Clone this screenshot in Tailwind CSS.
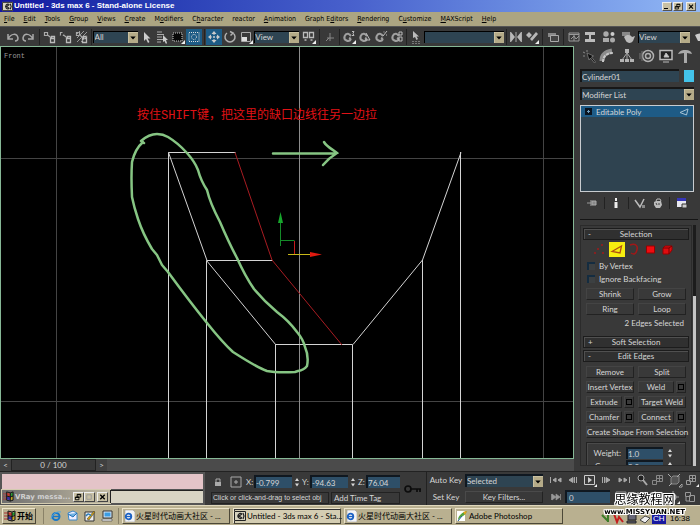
<!DOCTYPE html>
<html lang="en">
<head>
<meta charset="utf-8">
<title>Untitled - 3ds max 6 - Stand-alone License</title>
<script src="https://cdn.jsdelivr.net/npm/@tailwindcss/browser@4"></script>
</head>
<body class="flex h-screen flex-col overflow-hidden bg-[#393939] font-['Lato','Noto_Sans_CJK_SC',sans-serif] text-[8px] leading-[10px] text-[#d6d6d6]">
<svg class="hidden">
  <symbol id="down" viewBox="0 0 10 11"><path d="M0 0h10v11H0z" fill="#b5ab88"/><path d="M0 11V0h10" fill="none" stroke="#ddd5b8"/><path d="M2.300 4.500h5.400L5 7.500z" fill="#000"/></symbol>
  <symbol id="spin" viewBox="0 0 6 12"><path d="M1 5l2-3 2 3zM1 7.500l2 3 2-3z" fill="#d8d8d8"/></symbol>
  <symbol id="link" viewBox="0 0 16 16"><path d="M2.500 3.500h3v3h-3zM5.500 6l4 3" fill="none" stroke="#aaa" stroke-width="1.200"/><path d="M8.500 9.500h4v4h-4zM9.500 9V7.500h3V9" fill="none" stroke="#bbb" stroke-width="1.300"/></symbol>
  <symbol id="magnet" viewBox="0 0 16 16"><path d="M8 5a3.500 3.500 0 1 0 2 5M8 5l2 2M8 9l2 1" fill="none" stroke="#a0a0a0" stroke-width="2"/></symbol>
  <symbol id="ie" viewBox="0 0 12 12"><circle cx="6" cy="6.500" r="3.500" fill="none" stroke="#1978c8" stroke-width="2"/><path d="M3 6.500h6" stroke="#1978c8" stroke-width="1.500"/><path d="M1 9C2 4 7 1 11 2" fill="none" stroke="#55a6dd"/></symbol>
  <symbol id="iepage" viewBox="0 0 12 12"><path d="M2 0h8l2 2v10H2z" fill="#f4f4f4" stroke="#888" stroke-width=".5"/><circle cx="5.500" cy="6.500" r="2.800" fill="none" stroke="#1c62c4" stroke-width="1.800"/><path d="M3 6.500h5" stroke="#1c62c4" stroke-width="1.300"/></symbol>
  <symbol id="max" viewBox="0 0 12 12"><path d="M0 1h12v10H0z" fill="#d8d4c0"/><path d="M.5 1.500h11v9H.5z" fill="none" stroke="#222"/><path d="M8 4a2.500 2.500 0 1 0 0 4M8 4L5 6l3 2M9 3l1 3-1 3" fill="none" stroke="#222" stroke-width="1.200"/></symbol>
  <symbol id="win" viewBox="0 0 12 12"><path d="M1 2v8M3 2v8" stroke="#a33" stroke-dasharray="2 1"/><path d="M4 2l4 1v3L4 5z" fill="#c33a30"/><path d="M8 3l3-1v3L8 6z" fill="#279c32"/><path d="M4 6l4 1v3L4 9z" fill="#3a2fa8"/><path d="M8 7l3-1v3l-3 1z" fill="#c7a51f"/><path d="M4 1l4 1 3-1v9l-3 1-4-1zM8 2v9M4 5.500l4 1 3-1" fill="none" stroke="#111"/></symbol>
  <symbol id="restore" viewBox="0 0 10 9"><path d="M3.500 1.500h4v3h-4zM3.500 2h4M1.500 4.500h4v3h-4zM1.500 5h4" fill="none" stroke="#000"/></symbol>
  <symbol id="close" viewBox="0 0 10 9"><path d="M2.500 2l5 5M7.500 2l-5 5" stroke="#000" stroke-width="1.500"/></symbol>
</svg>

<header class="flex h-3 shrink-0 items-center gap-px bg-linear-to-r from-[#1416a0] via-[#4860cc] to-[#92b8f5] pl-0.5 pr-1 font-['Liberation_Sans',sans-serif] font-bold text-white">
  <svg class="size-[11px]"><use href="#max"/></svg>
  <h1 class="flex-1">Untitled - 3ds max 6 - Stand-alone License</h1>
  <button aria-label="Minimize" class="h-[9px] w-[10px] border border-[#eee] border-r-[#555] border-b-[#555] bg-[#c8c0a4]"><svg viewBox="0 0 8 7"><path d="M1 5.500h4" stroke="#000"/></svg></button>
  <button aria-label="Restore" class="h-[9px] w-[10px] border border-[#eee] border-r-[#555] border-b-[#555] bg-[#c8c0a4]"><svg viewBox="0 0 10 9"><use href="#restore"/></svg></button>
  <button aria-label="Close" class="ml-0.5 h-[9px] w-[10px] border border-[#eee] border-r-[#555] border-b-[#555] bg-[#c8c0a4]"><svg viewBox="0 0 10 9"><use href="#close"/></svg></button>
</header>

<nav class="flex h-[14px] shrink-0 items-center gap-[9px] bg-[#aca582] px-1 font-['DejaVu_Sans_Condensed','DejaVu_Sans',sans-serif] text-[7px] text-black">
  <a href="#"><u>F</u>ile</a><a href="#"><u>E</u>dit</a><a href="#"><u>T</u>ools</a><a href="#"><u>G</u>roup</a><a href="#"><u>V</u>iews</a><a href="#"><u>C</u>reate</a><a href="#">M<u>o</u>difiers</a><a href="#">C<u>h</u>aracter</a><a href="#">reactor</a><a href="#"><u>A</u>nimation</a><a href="#">Graph E<u>d</u>itors</a><a href="#"><u>R</u>endering</a><a href="#">C<u>u</u>stomize</a><a href="#"><u>M</u>AXScript</a><a href="#"><u>H</u>elp</a>
</nav>

<div role="toolbar" aria-label="Main toolbar" class="flex h-5 shrink-0 items-center overflow-hidden border-t border-[#555] bg-[#393939] pl-[5px] [&>button]:h-4 [&>button]:w-4 [&>button]:shrink-0">
  <button aria-label="Undo"><svg viewBox="0 0 16 16"><path d="M3 5v5h5M3 10c3-6 9-6 10-1 0 2-1 3-3 3" fill="none" stroke="#a8a8a8" stroke-width="1.500"/></svg></button>
  <button aria-label="Redo"><svg viewBox="0 0 16 16"><path d="M12 5v5H7M12 10C9 4 3 4 2 9c0 2 1 3 3 3" fill="none" stroke="#a8a8a8" stroke-width="1.500"/></svg></button>
  <i class="mx-[2px] h-4 w-px bg-[#222]"></i>
  <button aria-label="Select and link"><svg viewBox="0 0 16 16"><use href="#link"/></svg></button>
  <button aria-label="Unlink selection"><svg viewBox="0 0 16 16"><use href="#link"/><path d="M2 9l4-6" stroke="#393939" stroke-width="2"/></svg></button>
  <button aria-label="Bind to space warp"><svg viewBox="0 0 16 16"><use href="#link"/><path d="M2 6l4-4M3 9l7-7M3 13l10-10M7 13l6-6" stroke="#999"/></svg></button>
  <i class="mx-px h-4 w-px bg-[#222]"></i>
  <label class="relative flex w-[45px] shrink-0"><select aria-label="Selection filter" class="h-3 w-full appearance-none border-t border-l border-black bg-[#2e4452] pl-px leading-[10px]"><option>All</option></select><svg class="pointer-events-none absolute right-0 top-px h-[11px] w-[10px]"><use href="#down"/></svg></label>
  <button aria-label="Select object"><svg viewBox="0 0 16 16"><path d="M6 3v9l2-2 2 4 1.500-1L9.500 9.500h3z" fill="#ccc"/></svg></button>
  <button aria-label="Select by name"><svg viewBox="0 0 16 16"><path d="M3 3h5M3 5.500h7M3 8h5M3 10.500h6M3 13h4" stroke="#aaa"/><path d="M9 6v7l1.500-1 1.500 3 1-1-1-3h2z" fill="#ccc"/></svg></button>
  <button aria-label="Rectangular selection region"><svg viewBox="0 0 16 16"><path d="M3 4h9v8H3z" fill="#080808" stroke="#ccc" stroke-dasharray="1 1"/><path d="M15 11v4h-4z" fill="#eee"/></svg></button>
  <button aria-label="Window crossing" class="bg-[#1d5c86]"><svg viewBox="0 0 16 16"><path d="M3 3.500h10v9H3z" fill="none" stroke="#ddd" stroke-dasharray="1 1"/><circle cx="8" cy="8" r="2.500" fill="none" stroke="#ddd" stroke-dasharray="1 1"/></svg></button>
  <i class="mx-[2px] h-4 w-px bg-[#222]"></i>
  <button aria-label="Select and move" class="bg-[#1d5c86]"><svg viewBox="0 0 16 16"><path d="M8 2l2.500 3h-5zM8 14l2.500-3h-5zM2 8l3-2.500v5zM14 8l-3-2.500v5z" fill="#ccc"/><path d="M8 4v8M4 8h8" stroke="#ccc" stroke-dasharray="2 1"/></svg></button>
  <button aria-label="Select and rotate"><svg viewBox="0 0 16 16"><path d="M5 4a5 5 0 1 0 6 0M8.500 6.500L11 4 8 2.500" fill="none" stroke="#b0b0b0" stroke-width="1.500"/></svg></button>
  <button aria-label="Select and scale"><svg viewBox="0 0 16 16"><path d="M3.500 3.500h9v9h-9z" fill="none" stroke="#aaa"/><path d="M4 8h5v4H4z" fill="#ddd"/><path d="M15 11v4h-4z" fill="#eee"/></svg></button>
  <label class="relative flex w-[45px] shrink-0"><select aria-label="Reference coordinate system" class="h-3 w-full appearance-none border-t border-l border-black bg-[#2e4452] leading-[10px]"><option>View</option></select><svg class="pointer-events-none absolute right-0 top-px h-[11px] w-[10px]"><use href="#down"/></svg></label>
  <button aria-label="Use pivot point center" class="ml-0.5"><svg viewBox="0 0 16 16"><path d="M2.500 3.500h4v5h-4zM8.500 3.500h4v5h-4zM3.500 11h2M9.500 11h2" fill="none" stroke="#bbb" stroke-width="1.300"/><path d="M15 11v4h-4z" fill="#eee"/></svg></button>
  <i class="mx-[2px] h-4 w-px bg-[#222]"></i>
  <button aria-label="Select and manipulate"><svg viewBox="0 0 16 16"><path d="M8 4v8M5 9h7M4 12l3-3" stroke="#888"/></svg></button>
  <i class="mx-px h-4 w-px bg-[#222]"></i>
  <button aria-label="Snap toggle"><svg viewBox="0 0 16 16"><use href="#magnet"/><path d="M11 2.500h2l-1 2 1 2h-2" fill="none" stroke="#bbb"/><path d="M15 11v4h-4z" fill="#eee"/></svg></button>
  <button aria-label="Angle snap toggle"><svg viewBox="0 0 16 16"><use href="#magnet"/><path d="M9 4l4 7H8" fill="none" stroke="#bbb"/></svg></button>
  <button aria-label="Percent snap toggle"><svg viewBox="0 0 16 16"><use href="#magnet"/><path d="M10 7l4-5M10.500 3h1M13 6h1" stroke="#bbb"/></svg></button>
  <button aria-label="Spinner snap toggle"><svg viewBox="0 0 16 16"><use href="#magnet"/><path d="M10 3h3v3h-3zM10 8h3v4h-3z" fill="none" stroke="#bbb"/></svg></button>
  <i class="mx-px h-4 w-px bg-[#222]"></i>
  <button aria-label="Named selection sets"><svg viewBox="0 0 16 16"><path d="M5 2v7l2-1 1.500 3L10 10 8.500 7.500H11z" fill="#bbb"/><path d="M4 12.500h9M4 14.500h9" stroke="#777" stroke-dasharray="2 1"/></svg></button>
  <label class="relative flex w-[80px] shrink-0"><select aria-label="Named selection" class="h-3 w-full appearance-none border-t border-l border-black bg-[#2e4452]"><option></option></select><svg class="pointer-events-none absolute right-0 top-px h-[11px] w-[10px]"><use href="#down"/></svg></label>
  <i class="mx-[2px] h-4 w-px bg-[#222]"></i>
  <button aria-label="Mirror"><svg viewBox="0 0 16 16"><path d="M3 3l4 5-4 5zM13 3L9 8l4 5z" fill="#b8b8b8"/><path d="M8 3v10M2.500 3v10M13.500 3v10" stroke="#aaa"/></svg></button>
  <button aria-label="Align"><svg viewBox="0 0 16 16"><path d="M2 6l3-3 3 3-3 3zM6 10l6-7 2 2-6 7z" fill="#b8b8b8"/><path d="M15 11v4h-4z" fill="#eee"/></svg></button>
  <i class="mx-[2px] h-4 w-px bg-[#222]"></i>
  <button aria-label="Layer manager"><svg viewBox="0 0 16 16"><path d="M3 4h8v4H3z" fill="#888"/><path d="M5.500 6.500h8v6h-8z" fill="#444" stroke="#aaa"/></svg></button>
  <i class="mx-[2px] h-4 w-px bg-[#222]"></i>
  <button aria-label="Curve editor"><svg viewBox="0 0 16 16"><path d="M3 4h10v8H3zM3 5.500h10M5 10l3-3 2 3 3-3M8 5v7" fill="none" stroke="#999"/></svg></button>
  <button aria-label="Schematic view"><svg viewBox="0 0 16 16"><path d="M3 3h10v3H3zM3 10h10v3H3zM7 6h2v4H7z" fill="#bbb"/></svg></button>
  <button aria-label="Material editor" class="ml-[3px]"><svg viewBox="0 0 16 16"><circle cx="5" cy="5" r="2.700" fill="#aaa"/><circle cx="11.500" cy="5" r="2" fill="#ccc"/><circle cx="11.500" cy="11" r="2.500" fill="#aaa"/><path d="M2 9h6v4H2z" fill="#aaa"/></svg></button>
  <button aria-label="Render scene" class="ml-[3px]"><svg viewBox="0 0 16 16"><path d="M2 3h8v4H2z" fill="#888"/><path d="M4 8c3-3 7-2 8 0l3-1-2 5c-2 3-6 2-7 0z" fill="#bbb"/></svg></button>
  <label class="relative ml-[2px] flex min-w-[52px] flex-1"><select aria-label="Render type" class="h-3 w-full appearance-none border-t border-l border-black bg-[#2e4452] leading-[10px]"><option>View</option></select><svg class="pointer-events-none absolute right-0 top-px h-[11px] w-[10px]"><use href="#down"/></svg></label>
  <button aria-label="Quick render" class="-mr-1.5"><svg viewBox="0 0 16 16"><path d="M5 6c3-2 6-2 9 0v6H8z" fill="#ccc"/></svg></button>
</div>

<main class="flex min-h-0 flex-1">
  <div class="flex min-w-0 flex-1 flex-col">
    <section aria-label="Front viewport" class="relative min-h-0 flex-1 border border-[#86b896] bg-black">
      <span class="absolute left-[3px] top-1 font-['Liberation_Mono',monospace] text-[7px] text-[#9a9a9a]">Front</span>
      <svg class="absolute inset-0 size-full" viewBox="1 47 572 411" fill="none">
        <path d="M56.500 47v412M1 158.500h572M1 401.500h572M543.500 47v412" stroke="#444"/>
        <path d="M299.500 47v412" stroke="#8c8c8c"/>
        <g stroke="#d4d4d4"><path d="M168.500 459V152.500h67M168.500 152.500L207 260.500h66M206.500 459V260.500L276 345M275.500 459V344.500h77V459M353 344.500L422.500 260M422.500 459V260L461 152.500M460.500 152V459"/></g>
        <path d="M235 152.500L272 260l70 85" stroke="#a81c22"/>
        <path d="M280.500 246v-24M280.500 240.500h14" stroke="#148a28"/><path d="M280.500 212l2.500 11h-5z" fill="#17a62c"/>
        <path d="M294.500 241v13" stroke="#c41c1c"/><path d="M288 254.500h24" stroke="#c8b818"/><path d="M310 252l12 2.500-12 2.500z" fill="#e01a10"/>
        <path d="M144 143L141 141Q149 134 157 134Q163 134 168 137Q178 143 187 153Q195 162 198 170Q201 181 207 190Q210 203 220 222Q229 243 237 258Q245 276 254 289Q264 301 277 312Q289 321 297 332Q303 339 305 347Q309 356 307 366Q304 370 298 371L295 372Q277 373 267 371Q258 368 233 352Q223 343 207 323Q190 302 168 272L162 265L157 255L152 249Q143 234 138 219Q134 207 132 197Q131 177 132 162Q135 149 143 142" stroke="#86c583" stroke-width="2.500" stroke-linejoin="round" stroke-linecap="round"/>
        <path d="M273 153.500h63M324 142c3 5 8 7 13 11-5 3-9 6-14 12" stroke="#86c583" stroke-width="2.500" stroke-linecap="round"/>
      </svg>
      <p class="absolute left-[136px] top-[61px] whitespace-nowrap font-['Liberation_Mono','Noto_Sans_CJK_SC',monospace] text-[12px] leading-4 text-[#e01216]">按住SHIFT键，把这里的缺口边线往另一边拉</p>
    </section>
    <div class="flex h-3 shrink-0 items-stretch bg-[#4b4b4b] text-center">
      <button aria-label="Previous frame" class="w-[11px] bg-[#404040]">&lt;</button>
      <output class="w-[85px] border border-[#222] bg-[#393939]">0 / 100</output>
      <button aria-label="Next frame" class="w-[11px] bg-[#404040]">&gt;</button>
    </div>
  </div>

  <aside aria-label="Command panel" class="flex w-[126px] shrink-0 flex-col overflow-hidden pl-1.5 pr-1">
    <div class="flex h-[20px] items-center justify-between pr-0.5 [&>button]:size-[18px]">
      <button aria-label="Create"><svg viewBox="0 0 18 18"><path d="M7 6l2 7 1.500-2 4 5 1-1-4-5 2-1z" fill="#0c0c0c" stroke="#999" stroke-width=".6"/><path d="M3 5l2 1M7 3v2M3 9h2" stroke="#888"/></svg></button>
      <button aria-label="Modify"><svg viewBox="0 0 18 18"><path d="M3 14c0-6 4-9 10-10" fill="none" stroke="#8c8c8c" stroke-width="5"/><path d="M4 15C4 9 8 6 14 6" fill="none" stroke="#c8c8c8" stroke-width="2" stroke-dasharray="3 1"/></svg></button>
      <button aria-label="Hierarchy"><svg viewBox="0 0 18 18"><path d="M9 5v7M9 6l-5 7M9 6l5 7" stroke="#aaa"/><path d="M7 2h4v4H7zM2 12h4v3H2zM7 12h4v3H7zM12 12h4v3h-4z" fill="#b4b4b4"/></svg></button>
      <button aria-label="Motion"><svg viewBox="0 0 18 18" fill="none" stroke="#b0b0b0"><circle cx="10" cy="9" r="5.500" stroke-width="1.500"/><circle cx="10" cy="9" r="2.500" stroke-width="1.500"/><path d="M2 6v6M4 4v10" stroke="#777"/></svg></button>
      <button aria-label="Display"><svg viewBox="0 0 18 18"><path d="M3 3.500h12v9H3z" fill="#222" stroke="#bbb" stroke-width="1.500"/><path d="M7 10l2-4 3 4zM6 15h6" fill="#ccc" stroke="#bbb"/></svg></button>
      <button aria-label="Utilities"><svg viewBox="0 0 18 18"><path d="M2 7c2-4 5-4 8-4 3 0 5 1 6 4l-5-1v10H8V6z" fill="#aaa"/></svg></button>
    </div>
    <div class="mt-[3px] flex items-center gap-[5px] pr-0.5">
      <input aria-label="Object name" value="Cylinder01" class="h-[13px] min-w-0 flex-1 border-t-2 border-l-2 border-[#171717] bg-[#2e4452]">
      <button aria-label="Object color" class="h-3 w-[10px] bg-[#43c3ea]"></button>
    </div>
    <label class="relative mr-0.5 mt-[5px] flex"><select aria-label="Modifier list" class="h-[13px] w-full appearance-none border-t-2 border-l-2 border-[#171717] bg-[#2e4452] leading-[10px]"><option>Modifier List</option></select><svg class="pointer-events-none absolute right-0 top-0.5 h-[11px] w-[10px]"><use href="#down"/></svg></label>
    <div class="mr-0.5 mt-[5px] h-[87px] shrink-0 border border-[#c8ccd0] bg-[#2f4350]">
      <div class="flex h-[11px] items-center bg-[#1e5b86] pl-1 pr-1"><svg class="size-[7px]" viewBox="0 0 7 7"><path d="M0 0h7v7H0z" fill="#0a1420"/><path d="M2 3.500h3M3.500 2v3" stroke="#6c9cbd"/></svg><span class="ml-1 flex-1">Editable Poly</span><svg class="h-2 w-[10px]" viewBox="0 0 10 8"><path d="M1 4.500L9 1 7.500 7z" fill="none" stroke="#a9c4d4"/></svg></div>
    </div>
    <div class="mt-1 flex h-[14px] shrink-0 items-center justify-between pl-1.5 pr-2">
      <button aria-label="Pin stack"><svg class="size-3" viewBox="0 0 12 12"><path d="M1 6h4" stroke="#999"/><path d="M5 3v6M6 4h4v4H6z" fill="#888" stroke="#aaa"/></svg></button>
      <i class="h-3 w-px bg-[#222]"></i>
      <button aria-label="Show end result"><svg class="size-3" viewBox="0 0 12 12"><path d="M5 1h2v3H5zM4.500 5h3v6h-3z" fill="#eee"/></svg></button>
      <i class="h-3 w-px bg-[#222]"></i>
      <button aria-label="Make unique"><svg class="size-3" viewBox="0 0 12 12"><path d="M1 3l5 7 4-8" fill="none" stroke="#bbb" stroke-width="1.500"/><path d="M8 8h3v3H8z" fill="#888"/></svg></button>
      <button aria-label="Remove modifier"><svg class="size-3" viewBox="0 0 12 12"><path d="M2 5l2-1h5l1 4-2 3H4L2 8z" fill="#bbb"/><path d="M4 4l1-2h3l1 2" fill="none" stroke="#bbb"/><path d="M4 6l1 2M7 6v2" stroke="#444"/></svg></button>
      <i class="h-3 w-px bg-[#222]"></i>
      <button aria-label="Configure modifier sets"><svg class="size-3" viewBox="0 0 12 12"><path d="M1 1h9v9H1z" fill="#e8e8f0"/><path d="M1 1h9v3H1z" fill="#3636b8"/><path d="M6 7h5v4H6z" fill="#ccc" stroke="#333"/></svg></button>
    </div>
    <hr class="mt-[9px] mr-[-2px] border-[#151515]">
    <div class="mt-[5px] flex min-h-0 flex-1 gap-px overflow-hidden">
      <div class="flex min-w-0 flex-1 flex-col overflow-hidden border border-[#2b2b2b] px-0.5 text-center">
        <h2 class="relative mt-0.5 shrink-0 border border-[#1c1c1c] bg-[#303030] shadow-[inset_1px_1px_#505050]"><span class="absolute left-1">-</span>Selection</h2>
        <div class="mt-0.5 flex h-[15px] shrink-0 items-center gap-px pl-[9px] [&>button]:h-[15px] [&>button]:w-4">
          <button aria-label="Vertex"><svg viewBox="0 0 16 15"><path d="M2 11h2M5 7h2M9 3h2M10 11h2" stroke="#a01a1a" stroke-width="1.500"/></svg></button>
          <button aria-label="Edge" class="bg-[#f6ee10]"><svg viewBox="0 0 16 15"><path d="M3 9.500L12.500 4 11 11z" fill="none" stroke="#b05010" stroke-width="1.300"/></svg></button>
          <button aria-label="Border"><svg viewBox="0 0 16 15"><path d="M4 3c6-2 8 1 7 5s-3 5-6 3" fill="none" stroke="#a01818" stroke-width="1.500"/></svg></button>
          <button aria-label="Polygon"><svg viewBox="0 0 16 15"><path d="M3.500 4h8v7h-8z" fill="#f00c10" stroke="#900"/></svg></button>
          <button aria-label="Element"><svg viewBox="0 0 16 15"><path d="M3 6l2-2h7v4l-3 4H3z" fill="#e00c10" stroke="#900"/><path d="M3 6h6v6M9 6l3-2" fill="none" stroke="#700"/></svg></button>
        </div>
        <label class="mt-1 flex items-center gap-1 pl-1"><input type="checkbox" class="size-2 appearance-none border-t-2 border-l-2 border-[#142c40] bg-[#3c4042]">By Vertex</label>
        <label class="mt-[3px] flex items-center gap-1 pl-1"><input type="checkbox" class="size-2 appearance-none border-t-2 border-l-2 border-[#142c40] bg-[#3c4042]">Ignore Backfacing</label>
        <div class="mx-[3px] mt-1 grid shrink-0 grid-cols-2 gap-x-1 gap-y-[3px] [&>button]:border [&>button]:border-[#444] [&>button]:border-r-[#222] [&>button]:border-b-[#222]">
          <button>Shrink</button><button>Grow</button><button>Ring</button><button>Loop</button>
        </div>
        <p class="mr-[5px] mt-[3px] shrink-0 text-right">2 Edges Selected</p>
        <h2 class="relative mt-2 shrink-0 border border-[#1c1c1c] bg-[#303030] shadow-[inset_1px_1px_#505050]"><span class="absolute left-1">+</span>Soft Selection</h2>
        <h2 class="relative mt-0.5 shrink-0 border border-[#1c1c1c] bg-[#303030] shadow-[inset_1px_1px_#505050]"><span class="absolute left-1">-</span>Edit Edges</h2>
        <div class="mx-[3px] mt-1 grid shrink-0 grid-cols-2 gap-x-1 gap-y-[3px] [&_button]:h-3 [&_button]:border [&_button]:border-[#444] [&_button]:border-r-[#222] [&_button]:border-b-[#222]">
          <button>Remove</button><button>Split</button><button class="whitespace-nowrap">Insert Vertex</button>
          <div class="flex items-center gap-0.5"><button class="flex-1">Weld</button><button aria-label="Weld settings" class="w-[10px]"><i class="mx-auto block size-1.5 border border-black"></i></button></div>
          <div class="flex items-center gap-0.5"><button class="flex-1">Extrude</button><button aria-label="Extrude settings" class="w-[10px]"><i class="mx-auto block size-1.5 border border-black"></i></button></div>
          <button class="whitespace-nowrap">Target Weld</button>
          <div class="flex items-center gap-0.5"><button class="flex-1">Chamfer</button><button aria-label="Chamfer settings" class="w-[10px]"><i class="mx-auto block size-1.5 border border-black"></i></button></div>
          <div class="flex items-center gap-0.5"><button class="flex-1">Connect</button><button aria-label="Connect settings" class="w-[10px]"><i class="mx-auto block size-1.5 border border-black"></i></button></div>
          <button class="col-span-2 whitespace-nowrap">Create Shape From Selection</button>
        </div>
        <div class="mx-[3px] mt-1 min-h-0 flex-1 overflow-hidden border border-b-0 border-[#222] shadow-[inset_1px_1px_#4a4a4a]">
          <div class="mt-1 flex items-center justify-end gap-[5px] pr-3"><label for="wt">Weight:</label><input id="wt" value="1.0" class="h-3 w-[37px] border-t-2 border-l-2 border-[#101820] bg-[#2e4f68]"><svg class="-ml-px h-3 w-1.5"><use href="#spin"/></svg></div>
          <div class="mt-px flex items-center justify-end gap-[5px] pr-3"><label for="cr">Crease:</label><input id="cr" value="0.0" class="h-3 w-[37px] border-t-2 border-l-2 border-[#101820] bg-[#2e4f68]"><svg class="-ml-px h-3 w-1.5"><use href="#spin"/></svg></div>
        </div>
      </div>
      <div class="flex w-[3px] flex-col bg-[#1c1c1c] pt-[71px]"><div class="flex-1 bg-[#c4c4c4]"></div></div>
    </div>
    <div class="h-[5px] shrink-0"></div>
  </aside>
</main>

<footer class="shrink-0">
  <div class="flex h-[34px] border-t border-[#222] bg-[#393939]">
    <div class="flex w-[205px] flex-col gap-px bg-[#555] p-0.5">
      <input aria-label="Macro recorder" class="h-[15px] w-full bg-[#e4c4c8]">
      <div class="flex min-h-0 flex-1">
        <div class="flex w-[108px] items-center bg-linear-to-r from-[#6e6e6e] to-[#c4bca4] font-['DejaVu_Sans',sans-serif] text-[7px] font-bold text-[#d0d0d0] shadow-[0_0_0_1px_#d4ccb0]">
          <svg class="ml-px size-[11px]"><use href="#win"/></svg><span class="flex-1 whitespace-nowrap pl-px">VRay messa...</span>
          <button aria-label="Restore messages" class="h-[10px] w-[11px] border border-[#eee] border-r-[#444] border-b-[#444] bg-[#c8c0a4]"><svg viewBox="0 0 10 9"><use href="#restore"/></svg></button>
          <button aria-label="Maximize messages" class="h-[10px] w-[11px] border border-[#eee] border-r-[#444] border-b-[#444] bg-[#c8c0a4]"><svg viewBox="0 0 10 9"><path d="M2 2h5v5H2z" fill="none" stroke="#999"/></svg></button>
          <button aria-label="Close messages" class="mx-0.5 h-[10px] w-[11px] border border-[#eee] border-r-[#444] border-b-[#444] bg-[#c8c0a4]"><svg viewBox="0 0 10 9"><use href="#close"/></svg></button>
        </div>
        <input aria-label="Listener" class="min-w-0 flex-1 border-t border-l border-[#222] bg-[#d8d4c4]">
      </div>
    </div>
    <div class="flex w-[195px] flex-col pl-1.5">
      <div class="flex h-[19px] items-center">
        <button aria-label="Selection lock" class="w-[14px]"><svg class="mx-auto size-3" viewBox="0 0 12 12"><path d="M3 6h6v4H3z" fill="#aaa"/><path d="M4 6V3h4v3" fill="none" stroke="#aaa"/></svg></button>
        <button aria-label="Absolute mode" class="ml-1 w-[14px]"><svg class="mx-auto size-3" viewBox="0 0 12 12"><path d="M1 1h10v10H1zM6 4v4M4 6h4" fill="none" stroke="#aaa"/></svg></button>
        <label for="px" class="ml-[3px] w-2">X:</label><input id="px" value="-0.799" class="h-[13px] w-[38px] border-t-2 border-l-2 border-[#101820] bg-[#2e4f68]"><svg class="ml-0.5 h-3 w-1.5"><use href="#spin"/></svg>
        <label for="py" class="ml-0.5 w-2">Y:</label><input id="py" value="-94.63" class="h-[13px] w-[38px] border-t-2 border-l-2 border-[#101820] bg-[#2e4f68]"><svg class="ml-0.5 h-3 w-1.5"><use href="#spin"/></svg>
        <label for="pz" class="ml-0.5 w-2">Z:</label><input id="pz" value="76.04" class="h-[13px] min-w-0 flex-1 border-t-2 border-l-2 border-[#101820] bg-[#2e4f68]">
      </div>
      <div class="flex h-[14px] items-center gap-0.5 whitespace-nowrap"><p class="w-[118px] border border-[#222] pl-px font-['Liberation_Sans',sans-serif] text-[7px]">Click or click-and-drag to select obj</p><button class="flex-1 border border-[#222] pl-0.5 text-left">Add Time Tag</button></div>
    </div>
    <button aria-label="Set keys" class="w-[27px] border-r border-[#222]"><svg class="mx-auto h-2.5 w-5" viewBox="0 0 20 10" fill="none" stroke="#0c0c0c" stroke-width="1.700"><circle cx="5" cy="5" r="3"/><path d="M8 5h10M14 5v3M17 5v3"/></svg></button>
    <div class="grid w-[38px] grid-rows-2 whitespace-nowrap"><button>Auto Key</button><button>Set Key</button></div>
    <div class="grid w-[78px] grid-rows-2 items-center">
      <label class="relative flex"><select aria-label="Key mode" class="h-[13px] w-full appearance-none border-t-2 border-l-2 border-[#101820] bg-[#2e4452] leading-[10px]"><option>Selected</option></select><svg class="pointer-events-none absolute right-0 top-0.5 h-[11px] w-[10px]"><use href="#down"/></svg></label>
      <button class="h-3 border border-[#4a4a4a] border-r-[#222] border-b-[#222]">Key Filters...</button>
    </div>
    <div class="grid flex-1 grid-rows-2 pl-1">
      <div class="flex items-center [&>button]:h-4 [&>button]:w-[17px]">
        <button aria-label="Go to start"><svg viewBox="0 0 17 16"><path d="M3.500 5v6M9 6L6 8l3 2zM14 6l-3 2 3 2z" fill="#a8a8a8" stroke="#a8a8a8"/></svg></button>
        <button aria-label="Previous frame"><svg viewBox="0 0 17 16"><path d="M9 5.500v5L5 8zM10.500 5v6M12.500 5v6" fill="#a8a8a8" stroke="#a8a8a8"/></svg></button>
        <button aria-label="Play animation"><svg viewBox="0 0 17 16"><path d="M3.500 3.500h10v9h-10z" fill="none" stroke="#ccc"/><path d="M7 5l4 3-4 3z" fill="#ccc"/><path d="M16 12v3h-3z" fill="#eee"/></svg></button>
        <button aria-label="Next frame"><svg viewBox="0 0 17 16"><path d="M8 5.500v5L12 8zM4.500 5v6M6.500 5v6" fill="#a8a8a8" stroke="#a8a8a8"/></svg></button>
        <button aria-label="Go to end"><svg viewBox="0 0 17 16"><path d="M14.500 5v6M9 6l3 2-3 2zM4 6l3 2-3 2z" fill="#a8a8a8" stroke="#a8a8a8"/></svg></button>
        <button aria-label="Zoom"><svg viewBox="0 0 17 16"><circle cx="9" cy="6" r="3" fill="#222" stroke="#aaa"/><path d="M11 8l4 5" stroke="#aaa" stroke-width="2"/></svg></button>
        <button aria-label="Zoom all"><svg viewBox="0 0 17 16"><path d="M7.500 3.500h6v6h-6zM10.500 3v7M7 6.500h7M3.500 8.500h4v4h-4z" fill="none" stroke="#888"/></svg></button>
        <button aria-label="Zoom extents"><svg viewBox="0 0 17 16"><path d="M5 6l2-2h6v6l-2 2H5z" fill="#555" stroke="#888"/><path d="M2 2l3 3M14 2l-3 3M3 14l3-3M16 12v3h-3z" stroke="#aaa"/></svg></button>
        <button aria-label="Zoom extents all"><svg viewBox="0 0 17 16"><path d="M6.500 3.500h6v6h-6zM9.500 3v7M6 6.500h7M3.500 8.500h4v4h-4z" fill="none" stroke="#999"/><path d="M16 12v3h-3z" fill="#eee"/></svg></button>
      </div>
      <div class="flex items-center [&>button]:h-4 [&>button]:w-[17px]">
        <button aria-label="Key mode toggle"><svg viewBox="0 0 17 16"><path d="M4.500 5v6M13.500 5v6M5 5l4 3-4 3zM9 5l4 3-4 3z" fill="#999" stroke="#999" stroke-width=".7"/></svg></button>
        <input aria-label="Current frame" value="0" class="ml-px h-[13px] w-[45px] border-t-2 border-l-2 border-[#101820] bg-[#2e4f68] pl-0.5">
        <button aria-label="Time configuration" class="ml-[3px]"><svg viewBox="0 0 17 16"><path d="M3 3h10v9H3z" fill="none" stroke="#999"/></svg></button>
        <button aria-label="Region zoom"><svg viewBox="0 0 17 16"><path d="M4 4h8v8H4z" fill="none" stroke="#999" stroke-dasharray="2 1"/></svg></button>
        <button aria-label="Pan"><svg viewBox="0 0 17 16"><path d="M8 2v12M2 8h12" stroke="#aaa"/></svg></button>
        <button aria-label="Arc rotate"><svg viewBox="0 0 17 16"><circle cx="9" cy="8" r="3.500" fill="#aaa"/><path d="M9 2v12M3 8h12" stroke="#999"/><path d="M16 12v3h-3z" fill="#eee"/></svg></button>
        <button aria-label="Min max toggle"><svg viewBox="0 0 17 16"><path d="M4.500 3.500h5v4h-5zM8.500 6.500h5v6h-5zM5 8v4h3" fill="none" stroke="#999"/></svg></button>
      </div>
    </div>
  </div>

  <div class="flex h-5 items-center gap-[3px] border-t border-[#e0d8bc] bg-[#b9b090] pl-0.5 pr-0.5 text-black [&>button]:h-4 [&>button]:border [&>button]:border-[#ece4ca] [&>button]:border-r-[#4c4838] [&>button]:border-b-[#4c4838]">
    <button class="flex w-[34px] items-center whitespace-nowrap font-bold"><svg class="mx-px size-3 shrink-0"><use href="#win"/></svg>开始</button>
    <i class="ml-1 h-4 w-px bg-[#8a8268]"></i>
    <div class="flex w-[68px] items-center justify-around">
      <a href="#" aria-label="Internet Explorer"><svg class="size-3"><use href="#ie"/></svg></a>
      <a href="#" aria-label="Outlook Express"><svg class="size-3" viewBox="0 0 12 12"><path d="M1 3l5-2 4 2v7H2z" fill="#eef" stroke="#3a86c8"/><path d="M1 4l5 3 4-4" fill="#6fb1e3" stroke="#2672b9"/></svg></a>
      <a href="#" aria-label="Paint"><svg class="size-3" viewBox="0 0 12 12"><path d="M1 2h9v9H1z" fill="#eee" stroke="#333"/><path d="M3 9l7-8 1 1-6 8z" fill="#d3a113" stroke="#333" stroke-width=".5"/><path d="M2 6c2-3 4-2 5 0" stroke="#2a7dba" fill="none" stroke-width="1.500"/></svg></a>
      <a href="#" aria-label="Show desktop"><svg class="size-3" viewBox="0 0 12 12"><path d="M2 1h9v7H2z" fill="#dce9f8" stroke="#333"/><path d="M3.500 2.500h6v4h-6z" fill="#3b9ce2"/><path d="M1 9h10v2H1z" fill="#eee" stroke="#444" stroke-width=".6"/></svg></a>
    </div>
    <i class="h-4 w-px bg-[#8a8268]"></i>
    <button class="flex min-w-0 max-w-[108px] flex-1 items-center gap-px whitespace-nowrap"><svg class="size-3 shrink-0"><use href="#iepage"/></svg>火星时代动画大社区 - ...</button>
    <button class="flex min-w-0 max-w-[108px] flex-1 items-center gap-px whitespace-nowrap bg-[#d4cdb2] shadow-[inset_1px_1px_#333]"><svg class="size-3 shrink-0"><use href="#max"/></svg>Untitled - 3ds max 6 - Sta...</button>
    <button class="flex min-w-0 max-w-[108px] flex-1 items-center gap-px whitespace-nowrap"><svg class="size-3 shrink-0"><use href="#iepage"/></svg>火星时代动画大社区 - ...</button>
    <button class="flex min-w-0 max-w-[108px] flex-1 items-center gap-px whitespace-nowrap"><svg class="size-3 shrink-0" viewBox="0 0 12 12"><path d="M1 1h8v10H1z" fill="#fff"/><path d="M2 10c0-4 4-8 9-9-1 3-3 5-6 6z" fill="#57a53c"/><path d="M2 11l4-5" stroke="#225e9a"/><path d="M7 2l4-1-2 4z" fill="#e7a21c"/></svg>Adobe Photoshop</button>
    <div class="ml-auto flex h-4 w-[102px] shrink-0 items-end gap-px pl-1 pr-2 font-['Liberation_Sans',sans-serif]">
      <svg class="size-3" viewBox="0 0 12 12"><path d="M2 3l6 6M8 3v7" stroke="#3c7c28" stroke-width="2"/></svg>
      <svg class="size-3" viewBox="0 0 12 12"><path d="M1 2l3 8 2-5 4 5" fill="none" stroke="#c41c1c" stroke-width="2"/></svg>
      <svg class="size-3" viewBox="0 0 12 12"><path d="M2 2h8v6H2zM1 9h9v2H1z" fill="#667" stroke="#222"/></svg>
      <svg class="size-3" viewBox="0 0 12 12"><path d="M1 8l5-4 5 2-5 5z" fill="#eee" stroke="#444"/></svg>
      <span class="bg-[#1818a0] px-px text-white">CH</span>
      <time class="flex-1 text-right">16:38</time>
    </div>
  </div>
</footer>

<div class="pointer-events-none fixed right-[15px] bottom-2 flex flex-col items-center text-center [text-shadow:1px_0_#fff,-1px_0_#fff,0_1px_#fff,0_-1px_#fff,1px_1px_#fff,-1px_-1px_#fff,1px_-1px_#fff,-1px_1px_#fff]">
  <span class="text-[12px] leading-[15px] text-black">思缘教程网</span>
  <span class="font-['DejaVu_Sans',sans-serif] text-[7px] leading-[10px] font-bold text-black">www.MISSYUAN.NET</span>
</div>
</body>
</html>
